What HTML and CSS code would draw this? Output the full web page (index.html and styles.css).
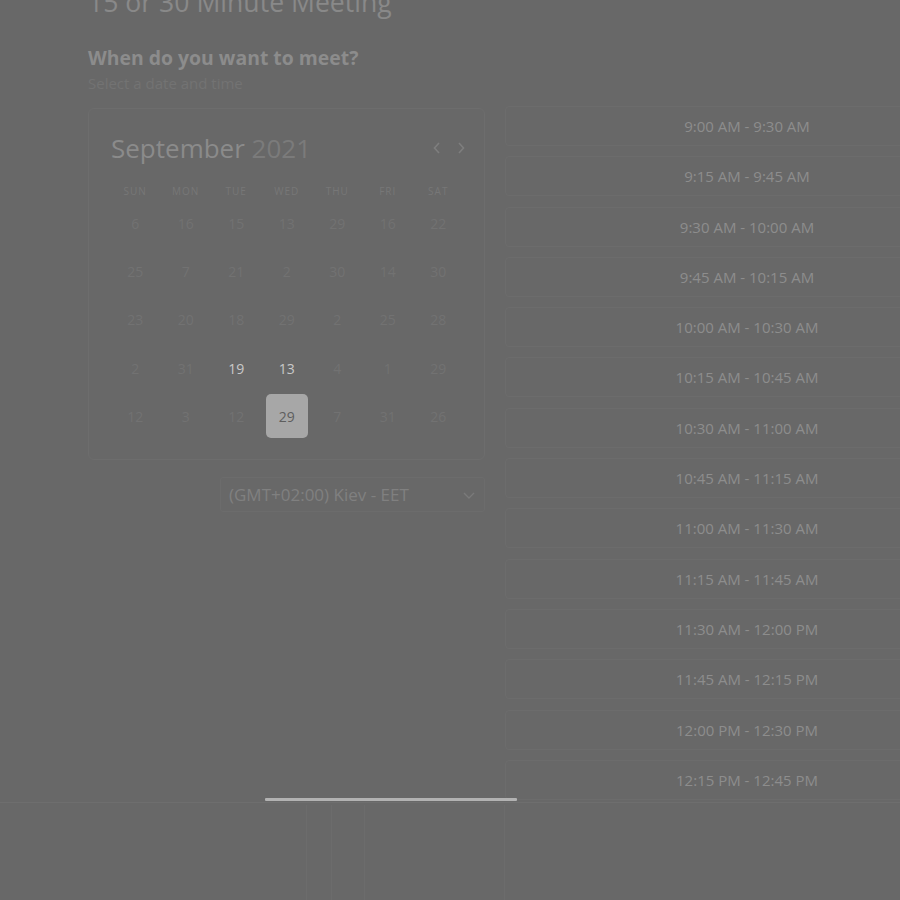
FILE: index.html
```html
<!DOCTYPE html>
<html>
<head>
<meta charset="utf-8">
<link rel="stylesheet" href="styles.css">
</head>
<body>
<div class="page">
  <div class="main">
    <h1 class="title">15 or 30 Minute Meeting</h1>
    <h2 class="question">When do you want to meet?</h2>
    <p class="hint">Select a date and time</p>
    <div class="cols">
      <div class="left">
        <div class="calendar">
          <div class="cal-head">
            <div class="month"><span class="m">September</span> <span class="y">2021</span></div>
            <div class="arrows">
              <svg width="10" height="14" viewBox="0 0 10 14"><path d="M7 2 L2.5 7 L7 12" fill="none" stroke="#7e7e7e" stroke-width="1.6"/></svg>
              <svg width="10" height="14" viewBox="0 0 10 14"><path d="M3 2 L7.5 7 L3 12" fill="none" stroke="#7e7e7e" stroke-width="1.6"/></svg>
            </div>
          </div>
          <div class="grid">
            <div class="wd">SUN</div><div class="wd">MON</div><div class="wd">TUE</div><div class="wd">WED</div><div class="wd">THU</div><div class="wd">FRI</div><div class="wd">SAT</div>
            <div class="d">6</div><div class="d">16</div><div class="d">15</div><div class="d">13</div><div class="d">29</div><div class="d">16</div><div class="d">22</div>
            <div class="d">25</div><div class="d">7</div><div class="d">21</div><div class="d">2</div><div class="d">30</div><div class="d">14</div><div class="d">30</div>
            <div class="d">23</div><div class="d">20</div><div class="d">18</div><div class="d">29</div><div class="d">2</div><div class="d">25</div><div class="d">28</div>
            <div class="d">2</div><div class="d">31</div><div class="d on">19</div><div class="d on">13</div><div class="d">4</div><div class="d">1</div><div class="d">29</div>
            <div class="d">12</div><div class="d">3</div><div class="d">12</div><div class="d"><span class="sel">29</span></div><div class="d">7</div><div class="d">31</div><div class="d">26</div>
          </div>
        </div>
        <div class="tz-row">
          <div class="tz">
            <span>(GMT+02:00) Kiev - EET</span>
            <svg width="14" height="10" viewBox="0 0 14 10"><path d="M2 3 L7 8 L12 3" fill="none" stroke="#7a7a7a" stroke-width="1.4"/></svg>
          </div>
        </div>
      </div>
      <div class="slots">
        <div class="slot">9:00 AM - 9:30 AM</div>
        <div class="slot">9:15 AM - 9:45 AM</div>
        <div class="slot">9:30 AM - 10:00 AM</div>
        <div class="slot">9:45 AM - 10:15 AM</div>
        <div class="slot">10:00 AM - 10:30 AM</div>
        <div class="slot">10:15 AM - 10:45 AM</div>
        <div class="slot">10:30 AM - 11:00 AM</div>
        <div class="slot">10:45 AM - 11:15 AM</div>
        <div class="slot">11:00 AM - 11:30 AM</div>
        <div class="slot">11:15 AM - 11:45 AM</div>
        <div class="slot">11:30 AM - 12:00 PM</div>
        <div class="slot">11:45 AM - 12:15 PM</div>
        <div class="slot">12:00 PM - 12:30 PM</div>
        <div class="slot">12:15 PM - 12:45 PM</div>
      </div>
    </div>
  </div>
  <div class="footer">
    <div class="bar"></div>
    <div class="vlines">
      <span class="v v1"></span><span class="v v2"></span><span class="v v3"></span><span class="v v4"></span>
    </div>
  </div>
</div>
</body>
</html>
```
FILE: styles.css
```css
html, body {
  margin: 0;
  padding: 0;
  background: #686868;
  font-family: "Open Sans", "Noto Sans", sans-serif;
  overflow: hidden;
}
.page {
  width: 900px;
  height: 900px;
  overflow: hidden;
  position: relative;
}
.main {
  padding-left: 88px;
  height: 803px;
  overflow: hidden;
  border-bottom: 1px solid #6e6e6e;
  box-sizing: border-box;
}
.title {
  margin: -17px 0 0 0;
  font-size: 26.6px;
  font-weight: 400;
  line-height: 38px;
  color: #898989;
}
.question {
  margin: 24px 0 0 0;
  font-size: 19.4px;
  font-weight: 700;
  line-height: 26px;
  color: #8c8c8c;
}
.hint {
  margin: 0;
  font-size: 15px;
  line-height: 24px;
  color: #737373;
}
.cols {
  display: flex;
  gap: 20px;
  margin-top: 13px;
}
.left {
  width: 397px;
  flex: none;
}
.calendar {
  border: 1px solid #6d6d6d;
  border-radius: 6px;
  height: 352px;
  box-sizing: border-box;
  padding: 22px 18px 0 10px;
}
.cal-head {
  display: flex;
  justify-content: space-between;
  align-items: center;
  padding-left: 12px;
}
.month {
  font-size: 26px;
  line-height: 34px;
  color: #8b8b8b;
}
.month .y { color: #7b7b7b; }
.arrows {
  display: flex;
  gap: 14px;
}
.arrows svg { display: block; }
.grid {
  display: grid;
  grid-template-columns: repeat(7, 50.5px);
  grid-template-rows: 16px;
  grid-auto-rows: 48.3px;
  margin-top: 18px;
  margin-left: 11px;
}
.wd {
  font-size: 10px;
  letter-spacing: 1px;
  color: #777777;
  text-align: center;
  line-height: 16px;
}
.d {
  display: flex;
  align-items: center;
  justify-content: center;
  font-size: 14px;
  color: #727272;
}
.d.on { color: #c9c9c9; }
.sel {
  width: 42px;
  height: 44px;
  border-radius: 5px;
  background: #a7a7a7;
  color: #5e5e5e;
  display: flex;
  align-items: center;
  justify-content: center;
}
.tz-row {
  display: flex;
  justify-content: flex-end;
  margin-top: 17px;
}
.tz {
  width: 265px;
  height: 35px;
  box-sizing: border-box;
  border: 1px solid #6c6c6c;
  border-radius: 3px;
  display: flex;
  align-items: center;
  justify-content: space-between;
  padding: 0 8px 0 8px;
  font-size: 17px;
  color: #808080;
}
.tz svg { display: block; }
.slots {
  display: flex;
  flex-direction: column;
  gap: 10.3px;
  margin-top: -2px;
  flex: none;
  width: 484px;
}
.slot {
  height: 40px;
  border: 1px solid #6c6c6c;
  border-radius: 4px;
  box-sizing: border-box;
  display: flex;
  align-items: center;
  justify-content: center;
  font-size: 15px;
  color: #8d8d8d;
}
.footer {
  position: relative;
  height: 97px;
}
.bar {
  position: absolute;
  left: 265px;
  top: -5px;
  width: 252px;
  height: 3px;
  background: #b2b2b2;
  border-radius: 1px;
}
.vlines { position: absolute; inset: 0; }
.v {
  position: absolute;
  top: 2px;
  bottom: 0;
  width: 1px;
  background: #6c6c6c;
}
.v1 { left: 306px; }
.v2 { left: 331px; }
.v3 { left: 364px; }
.v4 { left: 504px; }
```
